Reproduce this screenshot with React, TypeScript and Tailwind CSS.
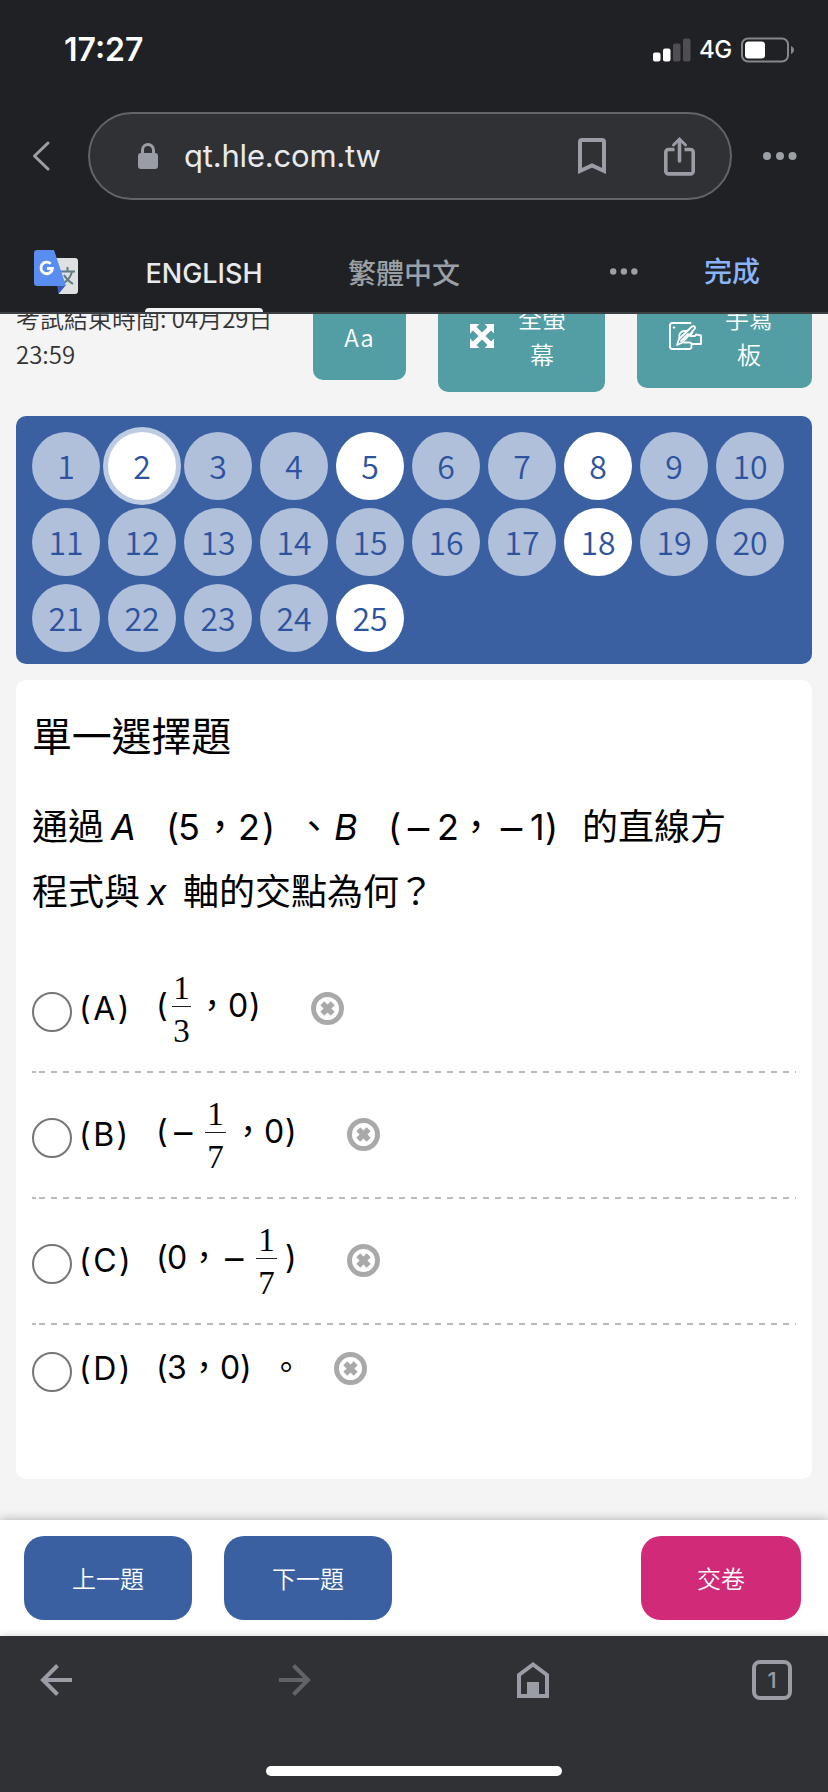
import type { ReactNode } from 'react';

interface Run {
  text: string;
  className: string;
}

const latin = "font-['Inter','Noto_Sans_CJK_TC',sans-serif]";
const cjk = "font-['Noto_Sans_CJK_TC',sans-serif]";

const answered = [2, 5, 8, 18, 25];
const current = 2;

const questionLines: Run[][] = [
  [
    { text: '通過', className: 'w-[79px]' },
    { text: 'A', className: 'w-[55px] italic' },
    { text: '(', className: 'w-[12px]' },
    { text: '5', className: 'w-[24px]' },
    { text: '\uff0c', className: 'w-[36px]' },
    { text: '2', className: 'w-[24px]' },
    { text: ')', className: 'w-[34px]' },
    { text: '、', className: 'w-[38px]' },
    { text: 'B', className: 'w-[54px] italic' },
    { text: '(', className: 'w-[15px]' },
    { text: '−', className: 'w-[34px] origin-left scale-x-130' },
    { text: '2', className: 'w-[21px]' },
    { text: '\uff0c', className: 'w-[38px]' },
    { text: '−', className: 'w-[34px] origin-left scale-x-130' },
    { text: '1', className: 'w-[15px]' },
    { text: ')', className: 'w-[37px]' },
    { text: '的直線方', className: 'w-[144px]' },
  ],
  [
    { text: '程式與', className: 'w-[115px]' },
    { text: 'x', className: 'w-[36px] italic' },
    { text: '軸的交點為何', className: 'w-[215px]' },
    { text: '\uff1f', className: 'w-[36px]' },
  ],
];

function Fraction({ top, bottom, className }: { top: string; bottom: string; className: string }) {
  return (
    <span className={`flex flex-col items-center font-['Liberation_Serif',serif] text-[33px] leading-[42px] ${className}`}>
      <span className="h-[39px]">{top}</span>
      <span className="h-px w-full bg-[#222]" />
      <span className="-mb-[3px] mt-[3px] h-[39px]">{bottom}</span>
    </span>
  );
}

function T({ children, className }: { children: ReactNode; className: string }) {
  return <span className={`shrink-0 whitespace-nowrap ${className}`}>{children}</span>;
}

const options = [
  {
    label: 'A',
    height: 'h-[124px]',
    body: (
      <>
        <T className="w-[16px]">(</T>
        <Fraction top="1" bottom="3" className="w-[19px]" />
        <T className="ml-[5px] w-[32px]">{'\uff0c'}</T>
        <T className="w-[21px]">0</T>
        <T className="w-[62px]">)</T>
      </>
    ),
  },
  {
    label: 'B',
    height: 'h-[124px]',
    body: (
      <>
        <T className="w-[14px]">(</T>
        <T className="w-[35px] origin-left scale-x-125">−</T>
        <Fraction top="1" bottom="7" className="w-[21px]" />
        <T className="ml-[6px] w-[32px]">{'\uff0c'}</T>
        <T className="w-[21px]">0</T>
        <T className="w-[62px]">)</T>
      </>
    ),
  },
  {
    label: 'C',
    height: 'h-[124px]',
    body: (
      <>
        <T className="w-[11px]">(</T>
        <T className="w-[21px]">0</T>
        <T className="w-[33px]">{'\uff0c'}</T>
        <T className="w-[35px] origin-left scale-x-125">−</T>
        <Fraction top="1" bottom="7" className="w-[21px]" />
        <T className="ml-[8px] w-[62px]">)</T>
      </>
    ),
  },
  {
    label: 'D',
    height: 'h-[88px]',
    body: (
      <>
        <T className="mt-[4px] w-[11px]">(</T>
        <T className="mt-[4px] w-[21px]">3</T>
        <T className="mt-[4px] w-[32px]">{'\uff0c'}</T>
        <T className="mt-[4px] w-[20px]">0</T>
        <T className="mt-[4px] w-[30px]">)</T>
        <T className="mt-[4px] w-[64px]">。</T>
      </>
    ),
  },
];

function StatusBar() {
  return (
    <div className="flex h-[100px] items-center pl-[64px] pr-[34px]">
      <span className="flex-1 text-[32px] font-semibold leading-none text-white">17:27</span>
      <svg className="h-[24px] w-[38px]" viewBox="0 0 38 24">
        <rect x="0" y="14.500" width="7.500" height="9" rx="2" fill="#fff" />
        <rect x="10" y="10.500" width="7.500" height="13" rx="2" fill="#fff" />
        <rect x="20" y="5.500" width="7.500" height="18" rx="2" fill="#4e4e53" />
        <rect x="30" y="0.500" width="7.500" height="23" rx="2" fill="#4e4e53" />
      </svg>
      <span className="ml-[8px] w-[35px] text-[24px] font-medium leading-none tracking-[-0.5px] text-white">4G</span>
      <svg className="ml-[6px] h-[26px] w-[54px]" viewBox="0 0 54 26">
        <rect x="2" y="1.500" width="46" height="23" rx="6" fill="none" stroke="#85878a" strokeWidth="2" />
        <rect x="5" y="4.500" width="20" height="17" rx="3.500" fill="#fff" />
        <path d="M51 9c4 1.500 4 6.500 0 8z" fill="#85878a" />
      </svg>
    </div>
  );
}

function AddressBar() {
  return (
    <div className="flex items-center pt-[12px]">
      <svg className="ml-[32px] h-[32px] w-[20px]" viewBox="0 0 20 32" fill="none" stroke="#9aa0a6" strokeWidth="3" strokeLinecap="round" strokeLinejoin="round">
        <path d="M16 3L2.500 16 16 29" />
      </svg>
      <div className="ml-[36px] flex h-[88px] w-[644px] items-center rounded-full border-2 border-[#636468] bg-[#303134]">
        <svg className="ml-[48px] h-[26px] w-[20px]" viewBox="0 0 20 26">
          <path d="M4.500 11V7a5.500 5.500 0 0111 0v4" fill="none" stroke="#9a9da5" strokeWidth="3" />
          <rect y="10" width="20" height="16" rx="3" fill="#9a9da5" />
        </svg>
        <span className="-mt-[2px] ml-[26px] flex-1 text-[31px] leading-none tracking-[-0.2px] text-[#e8eaed]">qt.hle.com.tw</span>
        <svg className="h-[38px] w-[28px]" viewBox="0 0 28 38" fill="none" stroke="#9a9da5" strokeWidth="4">
          <path d="M2 34V5a2 2 0 012-2h20a2 2 0 012 2v29l-12-5.500z" />
        </svg>
        <svg className="ml-[58px] mr-[35px] h-[40px] w-[31px]" viewBox="0 0 31 40" fill="none" stroke="#9a9da5" strokeWidth="3.600">
          <path d="M10.500 13.500H4.500a2.700 2.700 0 00-2.700 2.700v19a2.700 2.700 0 002.700 2.700h22a2.700 2.700 0 002.700-2.700v-19a2.700 2.700 0 00-2.700-2.700h-6" />
          <path d="M15.500 25V4" strokeLinecap="round" />
          <path d="M9.500 9l6-6 6 6" strokeLinecap="round" strokeWidth="3" />
        </svg>
      </div>
      <svg className="ml-[31px] h-[8px] w-[34px]" viewBox="0 0 34 8" fill="#9aa0a6">
        <circle cx="4" cy="4" r="4" />
        <circle cx="17" cy="4" r="4" />
        <circle cx="29.500" cy="4" r="4" />
      </svg>
    </div>
  );
}

function TranslateBar() {
  return (
    <div className="flex h-[114px] items-end border-b-2 border-[#3c4043]">
      <svg className="mb-[18px] ml-[34px] h-[44px] w-[44px]" viewBox="0 0 44 44">
        <path d="M20 8h21a3 3 0 013 3v30a3 3 0 01-3 3H25z" fill="#dfe0e1" />
        <path d="M26.500 21.500H41M33.500 17v4.500M38 21.500c-1 5-5 9.500-9 12M30 25c2 3.500 5 6.500 9 9" fill="none" stroke="#607d86" strokeWidth="2" />
        <path d="M23 35h9l-7.500 9z" fill="#3b57b8" />
        <path d="M3 0h17l12 36H3a3 3 0 01-3-3V3a3 3 0 013-3z" fill="#5a8df0" />
        <path d="M13 18.500h5.500a5.800 5.800 0 11-1.800-4.800" fill="none" stroke="#fff" strokeWidth="2.800" />
      </svg>
      <div className="ml-[67px] flex w-[118px] flex-col">
        <span className="whitespace-nowrap text-center text-[27px] font-medium leading-[36px] text-[#e8eaed]">ENGLISH</span>
        <span className="mt-[16px] h-[4px] rounded-t-[4px] bg-[#f1f3f4]" />
      </div>
      <span className={`mb-[20px] ml-[85px] w-[113px] text-[28px] font-medium leading-[40px] text-[#9aa0a6] ${cjk}`}>繁體中文</span>
      <svg className="mb-[37px] ml-[149px] h-[7px] w-[28px]" viewBox="0 0 28 7" fill="#9aa0a6">
        <circle cx="3.200" cy="3.500" r="3.200" />
        <circle cx="13.900" cy="3.500" r="3.200" />
        <circle cx="24.400" cy="3.500" r="3.200" />
      </svg>
      <span className={`mb-[22px] ml-[66px] text-[28px] font-medium leading-[40px] text-[#8ab4f8] ${cjk}`}>完成</span>
    </div>
  );
}

function Toolbar() {
  return (
    <div className={`h-[102px] overflow-hidden text-[24px] font-[350] leading-[36px] ${cjk}`}>
      {/* Scrolled partly under the browser chrome */}
      <div className="-mt-[14px] flex items-start pl-[16px]">
        <p className="w-[297px] text-[#333]">
          考試結束時間: 04月29日
          <br />
          23:59
        </p>
        <button className="h-[80px] w-[93px] rounded-[10px] bg-[#539da4] pb-[7px] tracking-[1px] text-white">Aa</button>
        <button className="ml-[32px] flex h-[92px] w-[167px] rounded-[10px] bg-[#539da4] text-white">
          <svg className="ml-[32px] mt-[24px] h-[24px] w-[24px]" viewBox="0 0 24 24" fill="#fff">
            <path d="M0 0h9.500L0 9.500zM24 0v9.500L14.500 0zM0 24v-9.500L9.500 24zM24 24h-9.500l9.500-9.500z" />
            <path d="M4 4l16 16M20 4L4 20" stroke="#fff" strokeWidth="4.800" />
          </svg>
          <span className="ml-[24px] w-[48px] text-center">全螢幕</span>
        </button>
        <button className="ml-[32px] flex h-[88px] w-[175px] rounded-[10px] bg-[#539da4] text-white">
          <svg className="ml-[32px] mt-[22px] h-[28px] w-[33px]" viewBox="0 0 33 28" fill="none" stroke="#fff" strokeWidth="1.800" strokeLinejoin="round" strokeLinecap="round">
            <path d="M21.500 1H2.500L1 2.500v23L2.500 27h18.500l1.500-1.500V22.500" />
            <path d="M8 23l2-6L23 4.500c1.500-1 3.500 0 3 2L13.500 20.500z" />
            <path d="M10.500 16c-1-4 1-6.500 4.500-7h3M23.500 10l-2.500 4h5l1-1.500 5 1v8.500h-8.500l-2.500-1.500h-6M12 19l7-7" />
            <path d="M4.500 5.500h1" />
          </svg>
          <span className="ml-[23px] w-[48px] text-center">手寫板</span>
        </button>
      </div>
    </div>
  );
}

function QuestionNav() {
  return (
    <div className="mx-4 flex h-[248px] flex-wrap content-start gap-2 rounded-[10px] bg-[#3a60a1] p-4">
      {Array.from({ length: 25 }, (_, i) => i + 1).map((n) => (
        <button
          key={n}
          className={`flex h-[68px] w-[68px] items-center justify-center rounded-full pb-[3px] text-[32px] font-[350] leading-none text-[#2d539f] ${cjk} ${
            answered.includes(n) ? 'bg-white' : 'bg-[#b0bfda]'
          } ${n === current ? 'ring-[5px] ring-[#bccae2]' : ''}`}
        >
          {n}
        </button>
      ))}
    </div>
  );
}

function Divider() {
  return (
    <div className="flex h-[2px]">
      <span className="mr-[3px] w-1 bg-[#bbb]" />
      <span className="flex-1 bg-[repeating-linear-gradient(90deg,#bbb_0_6px,transparent_6px_12px)]" />
    </div>
  );
}

function QuestionCard() {
  return (
    <div className="mx-4 mt-4 h-[799px] rounded-[10px] bg-white px-4 text-black">
      <h2 className={`pt-[24px] text-[40px] leading-[60px] tracking-[-0.2px] ${cjk}`}>單一選擇題</h2>
      <div className="mt-[31px] text-[36px]">
        {questionLines.map((runs, i) => (
          <div key={i} className="flex h-[65px] items-baseline leading-[65px]">
            {runs.map((run, j) => (
              <T key={j} className={run.className}>
                {run.text}
              </T>
            ))}
          </div>
        ))}
      </div>
      <div className="mt-[22px]">
        {options.map((option, i) => (
          <div key={option.label}>
            {i > 0 && <Divider />}
            <div className={`flex items-center text-[32px] ${option.height}`}>
              <span className="mt-[6px] h-[40px] w-[40px] shrink-0 rounded-full border-2 border-[#767676]" />
              <span className="-mt-px ml-[7px] w-[77px] shrink-0 leading-[40px] tracking-[2.5px]">({option.label})</span>
              <span className="-mt-[6px] flex items-center leading-[40px]">{option.body}</span>
              <svg className="-mt-[2px] h-[33px] w-[33px] shrink-0" viewBox="0 0 33 33">
                <circle cx="16.500" cy="16.500" r="14" fill="none" stroke="#a9a9a9" strokeWidth="5" />
                <path d="M11.300 11.300l10.400 10.400M21.700 11.300l-10.400 10.400" stroke="#a9a9a9" strokeWidth="5.600" />
              </svg>
            </div>
          </div>
        ))}
      </div>
    </div>
  );
}

function ActionBar() {
  return (
    <div className={`mt-[41px] flex h-[116px] items-center bg-white pl-[24px] pr-[27px] text-[24px] font-[350] text-white shadow-[0_0_10px_rgba(0,0,0,0.3)] ${cjk}`}>
      <button className="h-[84px] w-[168px] rounded-[20px] bg-[#3a60a1]">上一題</button>
      <button className="ml-[32px] h-[84px] w-[168px] rounded-[20px] bg-[#3a60a1]">下一題</button>
      <button className="ml-auto h-[84px] w-[160px] rounded-[20px] bg-[#d12a78]">交卷</button>
    </div>
  );
}

function BrowserNav() {
  return (
    <div className="relative flex h-[156px] flex-col items-center justify-between bg-[#303134] pb-[16px] pt-[24px] shadow-[0_0_8px_rgba(0,0,0,0.2)]">
      <div className="flex w-full items-center pl-[40px] pr-[36px]">
        <svg className="h-[32px] w-[32px]" viewBox="0 0 32 32" fill="none" stroke="#9a9da5" strokeWidth="4">
          <path d="M32 16H4M17.500 1.500L3 16l14.500 14.500" />
        </svg>
        <svg className="ml-[207px] h-[32px] w-[32px]" viewBox="0 0 32 32" fill="none" stroke="#606367" strokeWidth="4">
          <path d="M0 16h28M14.500 1.500L29 16 14.500 30.500" />
        </svg>
        <svg className="ml-[206px] h-[36px] w-[32px]" viewBox="0 0 32 36" fill="none" stroke="#9a9da5" strokeWidth="4">
          <path d="M2 34V13L16 2.500 30 13v21z" />
          <path d="M10 20h12v14H10z" fill="#9a9da5" stroke="none" />
        </svg>
        <span className="ml-auto flex h-[40px] w-[40px] items-center justify-center rounded-[8px] border-4 border-[#9a9da5] text-[22px] font-medium leading-none text-[#9a9da5]">1</span>
      </div>
      <span className="h-[10px] w-[296px] rounded-full bg-white" />
    </div>
  );
}

export default function App() {
  return (
    <div className={`h-[1792px] w-[828px] overflow-hidden bg-[#f4f4f4] ${latin}`}>
      <div className="bg-[#202124]">
        <StatusBar />
        <AddressBar />
        <TranslateBar />
      </div>
      <Toolbar />
      <QuestionNav />
      <QuestionCard />
      <ActionBar />
      <BrowserNav />
    </div>
  );
}
